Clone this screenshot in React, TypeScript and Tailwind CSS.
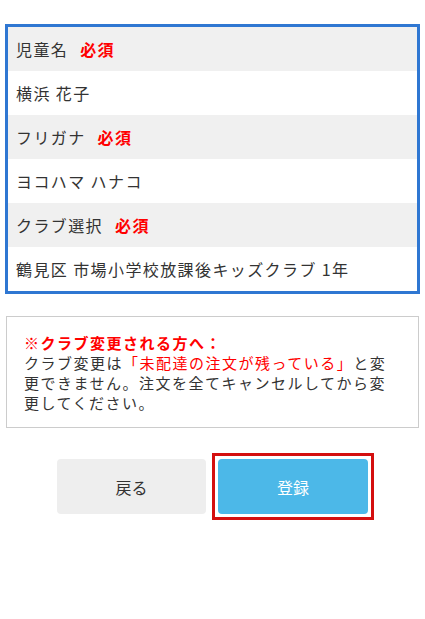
const font = "font-['Noto_Sans_CJK_JP','Noto_Sans',sans-serif]";

const rows = [
  { label: "児童名", required: true },
  { label: "横浜 花子" },
  { label: "フリガナ", required: true },
  { label: "ヨコハマ ハナコ" },
  { label: "クラブ選択", required: true },
  { label: "鶴見区 市場小学校放課後キッズクラブ 1年" },
];

export default function App() {
  return (
    <div className={`${font} min-h-[619px] bg-white px-[5px] pt-6 text-[#333]`}>
      <div className="border-[3px] border-[#2f77d2]">
        {rows.map((row, i) => (
          <div
            key={i}
            className={`flex h-[44px] items-center px-2 text-[16px] tracking-[1.4px] ${
              row.required ? "bg-[#f0f0f0]" : "bg-white"
            }`}
          >
            <span className="whitespace-pre">{row.label}</span>
            {row.required ? (
              <span className="ml-3 font-bold text-[#ff0000]">必須</span>
            ) : null}
          </div>
        ))}
      </div>

      <div className="mx-[1px] mt-[22px] border border-[#cccccc] px-[17px] pb-[14px] pt-[16px] text-[15px] leading-[20px] tracking-[1.5px]">
        <p className="font-bold text-[#ff0000]">※クラブ変更される方へ：</p>
        <p>
          クラブ変更は<span className="text-[#ff0000]">「未配達の注文が残っている」</span>
          と変更できません。注文を全てキャンセルしてから変更してください。
        </p>
      </div>

      <div className="mt-[25px] flex justify-center gap-[6px] pl-[6px]">
        <div className="py-[6px]">
          <button
            type="button"
            className="block h-[55px] w-[149px] rounded-[4px] bg-[#eeeeee] text-[16px] text-[#333]"
          >
            戻る
          </button>
        </div>
        <div className="border-[3px] border-[#d40f0f] p-[3px]">
          <button
            type="button"
            className="block h-[55px] w-[150px] rounded-[4px] bg-[#4cb8e8] text-[16px] text-white"
          >
            登録
          </button>
        </div>
      </div>
    </div>
  );
}
